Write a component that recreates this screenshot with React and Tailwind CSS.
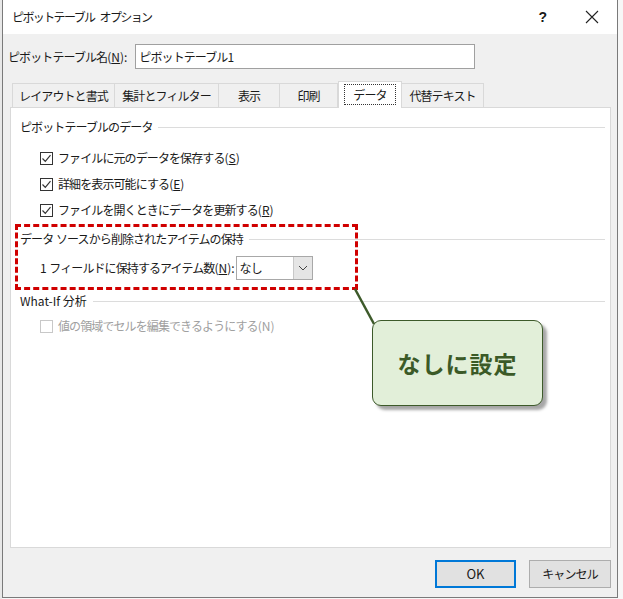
import React from "react";

const F = { fontFamily: '"Noto Sans CJK JP", "Noto Sans", sans-serif' };

function L({ children }) {
  return <span className="tracking-normal">{children}</span>;
}

function Check({ checked = true, disabled = false }) {
  return (
    <span
      className={`inline-flex w-[13px] h-[13px] border items-center justify-center bg-white ${
        disabled ? "border-[#c8c8c8]" : "border-[#333333]"
      }`}
    >
      {checked && (
        <svg width="11" height="11" viewBox="0 0 11 11">
          <path d="M1.5 5.5 L4.3 8.3 L9.5 2.2" fill="none" stroke="#333" strokeWidth="1.2" />
        </svg>
      )}
    </span>
  );
}

function Section({ title, className = "" }) {
  return (
    <div className={`flex items-center gap-[6px] pr-[5px] ${className}`}>
      <span className="whitespace-nowrap">{title}</span>
      <div className="flex-1 h-px bg-[#dcdcdc]" />
    </div>
  );
}

function Row({ children, disabled, className = "" }) {
  return (
    <div className={`flex items-center gap-[5px] pl-[20px] h-[26px] ${className}`}>
      <Check checked={!disabled} disabled={disabled} />
      <span className={disabled ? "text-[#a0a0a0]" : ""}>{children}</span>
    </div>
  );
}

export default function App() {
  const tabs = [
    { t: "レイアウトと書式", w: 103 },
    { t: "集計とフィルター", w: 105 },
    { t: "表示", w: 62 },
    { t: "印刷", w: 59 },
    { t: "データ", w: 64, sel: true },
    { t: "代替テキスト", w: 83 },
  ];
  return (
    <div
      className="w-[623px] h-[599px] bg-[#f7f7f7] relative overflow-hidden text-[12px] tracking-[-0.9px] text-[#1a1a1a] flex"
      style={F}
    >
      <div className="w-[2px] shrink-0 bg-[#e8e8e8]" />
      <div className="w-[616px] h-[598px] shrink-0 border-x border-b border-[#7a7a7a] bg-[#f0f0f0] flex flex-col">
        {/* title bar */}
        <div className="h-[34px] bg-white flex items-center justify-between pl-[9px] pr-[18px]">
          <span className="text-[12px] tracking-[-1.6px] flex">
            <span>ピボットテーブル</span>
            <span className="ml-[5px]">オプション</span>
          </span>
          <div className="flex items-center gap-[38px]">
            <span className="font-bold text-[14px] tracking-normal" style={{ fontFamily: '"Liberation Sans", sans-serif' }}>?</span>
            <svg width="14" height="14" viewBox="0 0 14 14">
              <path d="M1 1 L13 13 M13 1 L1 13" stroke="#222" strokeWidth="1.1" />
            </svg>
          </div>
        </div>
        {/* name row */}
        <div className="flex items-center mt-[10px] pl-[5px] h-[25px]">
          <span>
            ピボットテーブル名<L>(<span className="underline">N</span>):</L>
          </span>
          <div className="ml-[8px] w-[340px] h-[25px] bg-white border border-[#a0a0a0] flex items-center pl-[3px]">
            ピボットテーブル<L>1</L>
          </div>
        </div>
        {/* tabs */}
        <div className="flex items-end mt-[11px] pl-[9px] h-[27px]">
          {tabs.map((tb) => (
            <div
              key={tb.t}
              style={{ width: tb.w }}
              className={`flex items-center justify-center border-t border-x ${
                tb.sel
                  ? "h-[27px] bg-white border-[#d9d9d9] relative z-10 -mb-px pb-px"
                  : "h-[24px] bg-[#f0f0f0] border-[#d9d9d9] -ml-px first:ml-0"
              }`}
            >
              {tb.sel ? (
                <span className="border border-dotted border-[#333] px-[8px] leading-[19px]">{tb.t}</span>
              ) : (
                tb.t
              )}
            </div>
          ))}
        </div>
        {/* panel */}
        <div className="ml-[7px] mr-[6px] h-[441px] bg-white border border-[#d9d9d9] flex flex-col pl-[9px] pt-[10px]">
          <Section title="ピボットテーブルのデータ" className="h-[18px]" />
          <Row className="mt-[9px]">
            ファイルに元のデータを保存する<L>(<span className="underline">S</span>)</L>
          </Row>
          <Row>
            詳細を表示可能にする<L>(<span className="underline">E</span>)</L>
          </Row>
          <Row>
            ファイルを開くときにデータを更新する<L>(<span className="underline">R</span>)</L>
          </Row>
          <Section title={<>データ<L> </L>ソースから削除されたアイテムの保持</>} className="h-[18px] mt-[7px]" />
          <div className="flex items-center pl-[20px] mt-[7px] h-[26px]">
            <span>
              <L>1 </L>フィールドに保持するアイテム数<L>(<span className="underline">N</span>):</L>
            </span>
            <div className="ml-[1px] w-[77px] h-[24px] border border-[#a8a8a8] bg-white flex items-stretch">
              <span className="flex-1 pl-[3px] flex items-center">なし</span>
              <span className="w-[19px] bg-[#e5e5e5] border-l border-[#c8c8c8] flex items-center justify-center">
                <svg width="10" height="6" viewBox="0 0 10 6">
                  <path d="M1 1 L5 5 L9 1" fill="none" stroke="#444" strokeWidth="1" />
                </svg>
              </span>
            </div>
          </div>
          <Section title={<L>What-If 分析</L>} className="h-[18px] mt-[11px]" />
          <Row disabled className="mt-[3px]">
            値の領域でセルを編集できるようにする<L>(N)</L>
          </Row>
        </div>
        {/* buttons */}
        <div className="flex justify-end gap-[13px] mt-[12px] pr-[6px]">
          <button className="w-[81px] h-[28px] bg-[#e1e1e1] border-2 border-[#0078d7] tracking-normal text-[13px]">
            OK
          </button>
          <button className="w-[82px] h-[28px] bg-[#e1e1e1] border border-[#adadad] text-[12px]">
            キャンセル
          </button>
        </div>
      </div>
      <div className="flex-1 bg-[#f7f7f7]" />

      {/* annotation: dashed box */}
      <div className="absolute left-[15px] top-[224px] w-[343px] h-[66px] border-[3px] border-dashed border-[#d00000] pointer-events-none" />
      {/* connector */}
      <svg className="absolute left-0 top-0 pointer-events-none" width="623" height="599">
        <line x1="355" y1="289" x2="374" y2="324" stroke="#3d5a2a" strokeWidth="2.5" />
      </svg>
      {/* callout */}
      <div className="absolute left-[372px] top-[320px] w-[171px] h-[86px] rounded-[9px] border-[1.5px] border-[#3d5a2a] bg-[#e2efd9] shadow-[4px_4px_3px_rgba(0,0,0,0.35)] flex items-center justify-center">
        <span className="text-[23px] font-bold text-[#3b5a27] tracking-[1px]" style={F}>
          なしに設定
        </span>
      </div>
    </div>
  );
}
